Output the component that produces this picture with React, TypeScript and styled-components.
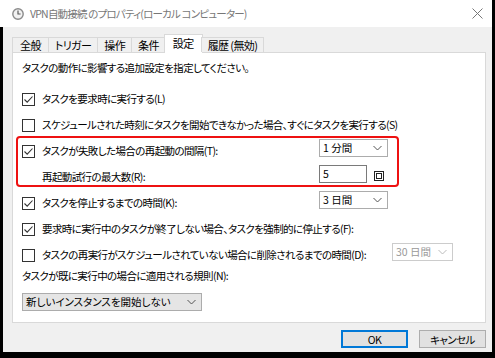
import React from "react";
import styled, { createGlobalStyle } from "styled-components";

const GlobalStyle = createGlobalStyle`
  html, body { margin: 0; padding: 0; background: #000; }
  body {
    font-family: "Noto Sans CJK JP", "Noto Sans", sans-serif;
    font-feature-settings: "palt";
    color: #000;
  }
`;

const Frame = styled.div`
  width: 495px;
  height: 358px;
  box-sizing: border-box;
  background: #000;
  padding: 0 3px 6px 0;
  display: flex;
`;

const Window = styled.div`
  flex: 1;
  display: flex;
  flex-direction: column;
  background: #f0f0f0;
`;

const TitleBar = styled.div`
  height: 27px;
  flex: none;
  background: #fff;
  display: flex;
  align-items: center;
  padding-left: 12px;
  gap: 6px;
  font-size: 10.5px;
  letter-spacing: -0.8px;
  color: #777;
`;

const CloseButton = styled.div`
  margin-left: auto;
  width: 30px;
  height: 27px;
  display: flex;
  align-items: center;
  justify-content: center;
`;

const Body = styled.div`
  flex: 1;
  display: flex;
  flex-direction: column;
  border-left: 3px solid #000;
  padding: 7px 6px 0 9px;
  font-size: 10.5px;
  letter-spacing: -0.6px;
`;

const TabStrip = styled.div`
  display: flex;
  align-items: flex-end;
  height: 18px;
  position: relative;
  z-index: 1;
`;

const Tab = styled.div<{ active?: boolean }>`
  box-sizing: border-box;
  height: ${(p) => (p.active ? 19 : 15)}px;
  margin-bottom: ${(p) => (p.active ? -1 : 0)}px;
  margin-left: ${(p) => (p.active ? -2 : -1)}px;
  margin-right: ${(p) => (p.active ? -1 : 0)}px;
  padding: ${(p) => (p.active ? "1px 8px 0" : "0 6px")};
  background: ${(p) => (p.active ? "#fff" : "#f0f0f0")};
  border: 1px solid #d9d9d9;
  border-bottom: none;
  font-size: 11px;
  line-height: 14px;
  display: flex;
  align-items: ${(p) => (p.active ? "flex-start" : "center")};
  &:first-child { margin-left: 0; padding: 0 7px; }
`;

const Panel = styled.div`
  height: 271px;
  box-sizing: border-box;
  flex: none;
  background: #fff;
  border: 1px solid #d9d9d9;
  padding: 7px 10px 0 9px;
  display: flex;
  flex-direction: column;
`;

const Line = styled.div<{ gap?: number }>`
  height: 16px;
  line-height: 16px;
  margin-bottom: ${(p) => p.gap ?? 0}px;
  white-space: nowrap;
`;

const Row = styled.div<{ labelWidth?: number }>`
  display: grid;
  grid-template-columns: 20px ${(p) => p.labelWidth ?? 277}px auto;
  align-items: center;
  height: 26px;
  white-space: nowrap;
`;

const Label = styled.span`
  line-height: 16px;
`;

const Control = styled.div`
  align-self: start;
  margin-top: 1px;
  display: flex;
  align-items: center;
  gap: 7px;
`;

const Highlight = styled.div`
  box-sizing: border-box;
  width: 383px;
  height: 51px;
  margin: -2px 0 3px -6px;
  padding-left: 4px;
  border: 2px solid #ee1111;
  border-radius: 4px;
`;

const Box = styled.span`
  width: 13px;
  height: 13px;
  box-sizing: border-box;
  border: 1px solid #333;
  background: #fff;
  display: flex;
  align-items: center;
  justify-content: center;
`;

const Select = styled.div<{ width: number; flat?: boolean; disabled?: boolean }>`
  box-sizing: border-box;
  width: ${(p) => p.width}px;
  height: 18px;
  border: 1px solid ${(p) => (p.disabled ? "#cccccc" : "#acacac")};
  background: ${(p) => (p.flat ? "#e5e5e5" : "#fff")};
  color: ${(p) => (p.disabled ? "#999" : "#000")};
  display: flex;
  align-items: center;
  justify-content: space-between;
  padding: 0 5px 0 3px;
  line-height: 16px;
  letter-spacing: 0;
  white-space: pre;
`;

const Input = styled.div`
  box-sizing: border-box;
  width: 48px;
  height: 18px;
  border: 1px solid #7a7a7a;
  background: #fff;
  padding: 0 3px;
  line-height: 15px;
`;

const Spinner = styled.span`
  width: 10px;
  height: 10px;
  box-sizing: border-box;
  border: 1px solid #222;
  display: flex;
  align-items: center;
  justify-content: center;
  margin-top: 4px;
  &::after {
    content: "";
    width: 4px;
    height: 4px;
    border: 1px solid #222;
  }
`;

const ButtonRow = styled.div`
  display: flex;
  justify-content: flex-end;
  gap: 11px;
  padding-top: 7px;
`;

const Button = styled.div<{ primary?: boolean }>`
  box-sizing: border-box;
  width: 67px;
  height: 18px;
  background: #e1e1e1;
  border: ${(p) => (p.primary ? "2px solid #0078d7" : "1px solid #adadad")};
  display: flex;
  align-items: center;
  justify-content: center;
`;

const Chevron = ({ color = "#555" }: { color?: string }) => (
  <svg width="9" height="6" viewBox="0 0 9 6">
    <path d="M0.5 1 L4.5 5 L8.5 1" fill="none" stroke={color} strokeWidth="1" />
  </svg>
);

const Checkbox = ({ checked }: { checked?: boolean }) => (
  <Box>
    {checked && (
      <svg width="11" height="11" viewBox="0 0 11 11">
        <path d="M1.5 5.5 L4.2 8.2 L9.5 2.5" fill="none" stroke="#333" strokeWidth="1.1" />
      </svg>
    )}
  </Box>
);

const ClockIcon = () => (
  <svg width="12" height="12" viewBox="0 0 12 12">
    <circle cx="6" cy="6" r="5.2" fill="#f2f2f2" stroke="#8a8a8a" strokeWidth="1.4" />
    <path d="M6 2.6 V6 H8.6" fill="none" stroke="#5a5a5a" strokeWidth="1.2" />
  </svg>
);

const tabs = ["全般", "トリガー", "操作", "条件", "設定", "履歴 (無効)"];

export default function App() {
  return (
    <Frame>
      <GlobalStyle />
      <Window>
        <TitleBar>
          <ClockIcon />
          <span>VPN自動接続 のプロパティ(ローカル コンピューター)</span>
          <CloseButton>
            <svg width="11" height="11" viewBox="0 0 11 11">
              <path d="M0.5 0.5 L10.5 10.5 M10.5 0.5 L0.5 10.5" stroke="#777" strokeWidth="1" />
            </svg>
          </CloseButton>
        </TitleBar>
        <Body>
          <TabStrip>
            {tabs.map((t) => (
              <Tab key={t} active={t === "設定"}>{t}</Tab>
            ))}
          </TabStrip>
          <Panel>
            <Line gap={10}>タスクの動作に影響する追加設定を指定してください。</Line>
            <Row>
              <Checkbox checked />
              <Label>タスクを要求時に実行する(L)</Label>
            </Row>
            <Row>
              <Checkbox />
              <Label>スケジュールされた時刻にタスクを開始できなかった場合、すぐにタスクを実行する(S)</Label>
            </Row>
            <Highlight>
              <Row>
                <Checkbox checked />
                <Label>タスクが失敗した場合の再起動の間隔(T):</Label>
                <Control>
                  <Select width={69}>
                    <span>1 分間</span>
                    <Chevron />
                  </Select>
                </Control>
              </Row>
              <Row>
                <span />
                <Label>再起動試行の最大数(R):</Label>
                <Control>
                  <Input>5</Input>
                  <Spinner />
                </Control>
              </Row>
            </Highlight>
            <Row>
              <Checkbox checked />
              <Label>タスクを停止するまでの時間(K):</Label>
              <Control>
                <Select width={69}>
                  <span>3 日間</span>
                  <Chevron />
                </Select>
              </Control>
            </Row>
            <Row>
              <Checkbox checked />
              <Label>要求時に実行中のタスクが終了しない場合、タスクを強制的に停止する(F):</Label>
            </Row>
            <Row labelWidth={350}>
              <Checkbox />
              <Label>タスクの再実行がスケジュールされていない場合に削除されるまでの時間(D):</Label>
              <Control>
                <Select width={61} disabled>
                  <span>30 日間</span>
                  <Chevron color="#bbb" />
                </Select>
              </Control>
            </Row>
            <Line gap={9}>タスクが既に実行中の場合に適用される規則(N):</Line>
            <Select width={180} flat>
              <span>新しいインスタンスを開始しない</span>
              <Chevron />
            </Select>
          </Panel>
          <ButtonRow>
            <Button primary>OK</Button>
            <Button>キャンセル</Button>
          </ButtonRow>
        </Body>
      </Window>
    </Frame>
  );
}
